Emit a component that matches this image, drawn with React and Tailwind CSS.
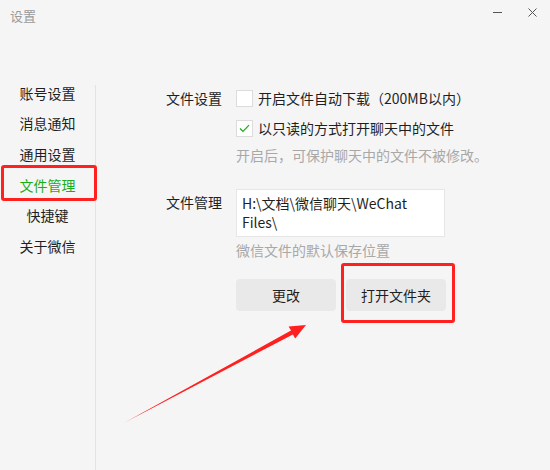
import React, { useState } from 'react';

const menu = ['账号设置', '消息通知', '通用设置', '文件管理', '快捷键', '关于微信'];

const Checkbox = ({ checked }) => (
  <span className="w-[17px] h-[17px] bg-white border border-[#dcdcdc] flex items-center justify-center shrink-0">
    {checked && (
      <svg width="11" height="9" viewBox="0 0 11 9" fill="none">
        <path d="M1 4.5 L4 7.5 L10 1.2" stroke="#1aad19" strokeWidth="1.2" />
      </svg>
    )}
  </span>
);

const App = () => {
  const [active] = useState('文件管理');
  const [autoDownload, setAutoDownload] = useState(false);
  const [readOnly, setReadOnly] = useState(true);

  return (
    <div className="relative w-[550px] h-[470px] overflow-hidden bg-[#f5f5f5] text-[#1f1f1f] font-['Noto_Sans_CJK_SC',sans-serif]">
      {/* Title bar */}
      <div className="h-[78px] flex items-start justify-between">
        <span className="ml-[10px] mt-[6px] text-[13px] leading-[20px] text-[#9a9a9a]">设置</span>
        <div className="flex items-center mt-[3px] mr-[8px]">
          <span className="w-[24px] h-[18px] flex items-center justify-center">
            <span className="w-[9px] h-px bg-[#555]" />
          </span>
          <span className="ml-[13px] w-[20px] h-[18px] flex items-center justify-center">
            <svg width="9" height="9" viewBox="0 0 9 9">
              <path d="M0.5 0.5 L8.5 8.5 M8.5 0.5 L0.5 8.5" stroke="#555" strokeWidth="1" />
            </svg>
          </span>
        </div>
      </div>

      <div className="flex h-[392px]">
        {/* Sidebar */}
        <div className="w-[95px] flex flex-col">
          {menu.map((item) => (
            <div
              key={item}
              className={`relative h-[30.6px] flex items-center justify-center text-[14px] ${
                item === active ? 'text-[#1aad19]' : 'text-[#1f1f1f]'
              }`}
            >
              {item}
              {item === active && <span className="absolute right-[-1px] top-[3px] bottom-[3px] w-[2px] bg-[#1aad19]" />}
            </div>
          ))}
        </div>
        <div className="w-px bg-[#e3e3e3] mt-[7px]" />

        {/* Content */}
        <div className="flex-1 pl-[70px] pt-[6px] text-[14px]">
          <div className="flex">
            <div className="w-[70px] h-[29px] flex items-center">文件设置</div>
            <div className="flex flex-col">
              <label className="h-[29px] flex items-center gap-[5px]" onClick={() => setAutoDownload(!autoDownload)}>
                <Checkbox checked={autoDownload} />
                <span>开启文件自动下载（200MB以内）</span>
              </label>
              <label className="h-[30px] flex items-center gap-[5px]" onClick={() => setReadOnly(!readOnly)}>
                <Checkbox checked={readOnly} />
                <span>以只读的方式打开聊天中的文件</span>
              </label>
              <div className="h-[24px] flex items-center text-[#a8a8a8]">开启后，可保护聊天中的文件不被修改。</div>
            </div>
          </div>

          <div className="flex mt-[22px]">
            <div className="w-[70px] pt-[3px] leading-[20px]">文件管理</div>
            <div className="flex flex-col">
              <div className="w-[209px] h-[48px] bg-white border border-[#e6e6e6] px-[5px] pt-[4px] leading-[19px]">
                H:\文档\微信聊天\WeChat Files\
              </div>
              <div className="h-[26px] flex items-center text-[#a8a8a8]">微信文件的默认保存位置</div>
              <div className="flex gap-[10px] mt-[16px]">
                <button className="w-[100px] h-[32px] rounded-[4px] bg-[#e9e9e9] text-[#1f1f1f]">更改</button>
                <button className="w-[100px] h-[32px] rounded-[4px] bg-[#e9e9e9] text-[#1f1f1f]">打开文件夹</button>
              </div>
            </div>
          </div>
        </div>
      </div>

      {/* Annotations */}
      <div className="absolute left-[1px] top-[165px] w-[96px] h-[36px] border-[3px] border-[#ff2020] rounded-[3px] pointer-events-none" />
      <div className="absolute left-[341px] top-[263px] w-[114px] h-[60px] border-[3px] border-[#ff2020] rounded-[3px] pointer-events-none" />
      <svg className="absolute left-0 top-0 pointer-events-none" width="550" height="470">
        <defs>
          <linearGradient id="tail" x1="122" y1="424" x2="300" y2="330" gradientUnits="userSpaceOnUse">
            <stop offset="0" stopColor="#ff2020" stopOpacity="0.4" />
            <stop offset="0.1" stopColor="#ff2020" />
            <stop offset="1" stopColor="#ff2020" />
          </linearGradient>
        </defs>
        <polygon
          points="122,424 291,330.6 288.6,326.6 306,325 295.2,338.4 292.9,334.4"
          fill="url(#tail)"
        />
      </svg>
    </div>
  );
};

export default App;
